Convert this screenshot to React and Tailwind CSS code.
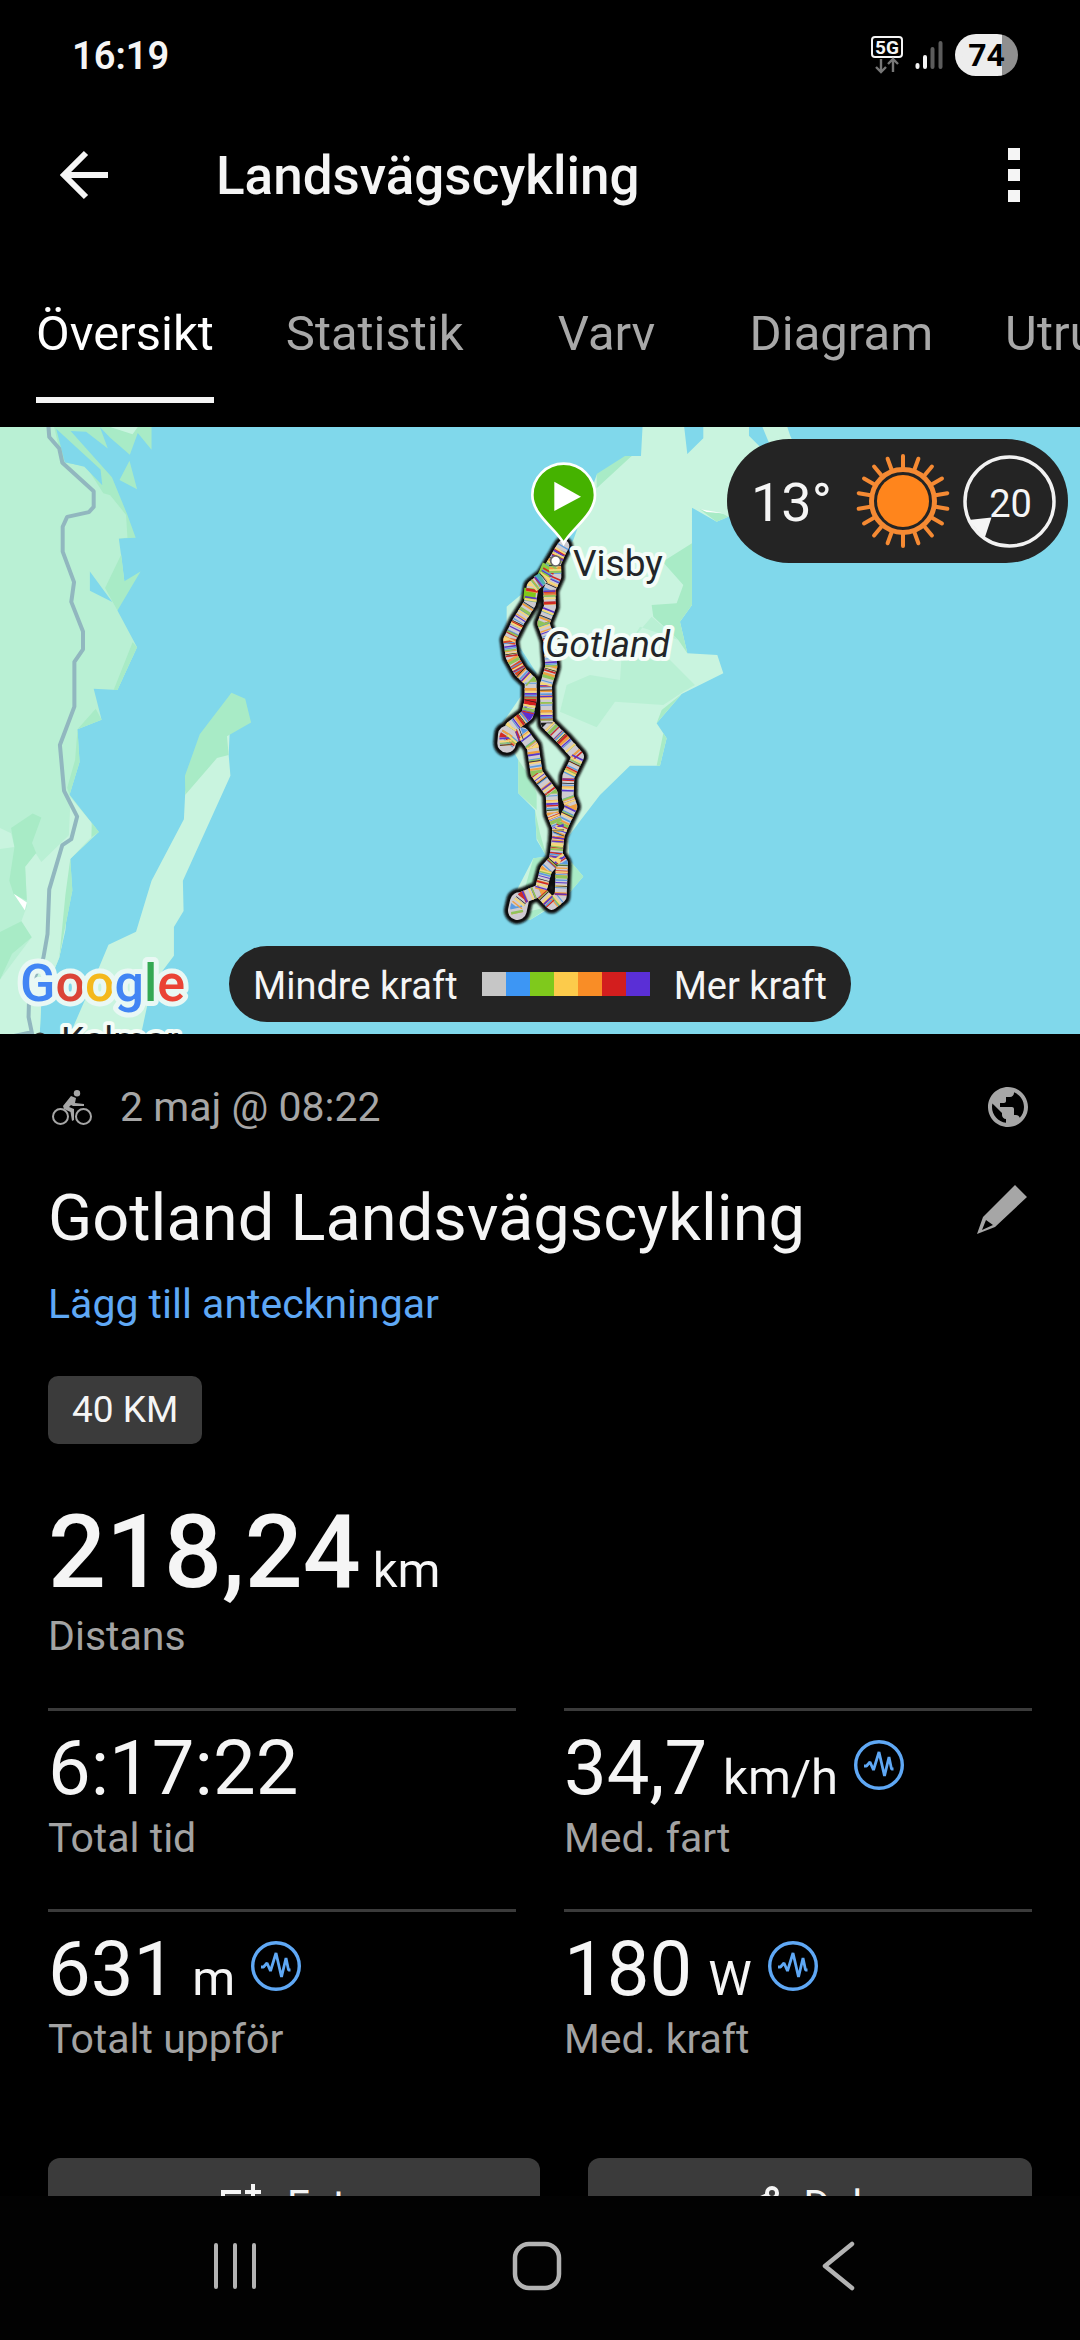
import React from "react";
import { MdPublic } from "react-icons/md";

const tabs = [
  { label: "Översikt", active: true },
  { label: "Statistik" },
  { label: "Varv" },
  { label: "Diagram" },
  { label: "Utrustning" },
];

const powerScale = ["#c6c6c6", "#3d96f4", "#7fc91c", "#fccb4b", "#f98d26", "#d31e1e", "#5a2fd6"];

const stats = [
  { value: "6:17:22", label: "Total tid" },
  { value: "34,7", unit: "km/h", label: "Med. fart", trend: true },
  { value: "631", unit: "m", label: "Totalt uppför", trend: true },
  { value: "180", unit: "W", label: "Med. kraft", trend: true },
];

const westLeg =
  "M370 318 L345 360 L315 410 L278 440 L270 490 L235 545 L208 600 L215 650 L240 695 L272 725 L272 780 L262 825 L215 860 L196 890 L198 918 L222 890 L248 880 L278 920 L290 1000 L335 1060 L338 1120 L354 1160 L355 1190 L345 1260 L318 1290 L302 1350 L250 1372 L228 1400 L232 1420";
const eastLeg =
  "M362 330 L345 370 L346 410 L328 450 L330 500 L310 550 L328 600 L334 680 L318 735 L320 850 L370 900 L414 950 L385 1010 L383 1070 L394 1100 L370 1150 L354 1190 L350 1245 L366 1270 L362 1370 L335 1392 L305 1360";

const bands = [
  { color: "#5b9be0", dash: "4 17 5 29 3 13" },
  { color: "#f0a040", dash: "6 31 4 19 8 43", offset: 7 },
  { color: "#d02a24", dash: "4 27 8 61 5 41", offset: 15 },
  { color: "#8fc45a", dash: "5 47 4 29 9 71", offset: 22 },
  { color: "#5b35c8", dash: "4 53 5 67 3 31", offset: 34 },
  { color: "#f5d77a", dash: "5 37 6 41", offset: 28 },
  { color: "#1c1c1c", dash: "2 97 2 61", offset: 50 },
];

const accents = [
  { d: "M271 445L268 478", color: "#7fc91c" },
  { d: "M210 595L208 612", color: "#d8452a" },
  { d: "M226 670L244 697", color: "#dc4a24" },
  { d: "M272 768L270 795", color: "#d31e1e" },
  { d: "M270 808L255 832", color: "#5a2fd6" },
  { d: "M330 450L331 468", color: "#e06a3a" },
  { d: "M325 375L310 410", color: "#8dcc3f" },
  { d: "M290 425L308 415", color: "#4fb3a8" },
];

function Statusbar() {
  return (
    <div className="flex h-[110px] shrink-0 items-center justify-between pl-[72px] pr-[62px]">
      <span className="pt-px text-[38px] font-semibold leading-none">16:19</span>
      <div className="flex items-center gap-3">
        <svg width="32" height="38" viewBox="0 0 32 38" aria-label="5G">
          <rect x="1" y="1" width="30" height="20" rx="3" fill="none" stroke="#f5f5f5" strokeWidth="2" />
          <text x="16" y="18" textAnchor="middle" fontSize="19" fontWeight="700" fill="#f5f5f5" fontFamily="Roboto">5G</text>
          <path d="M10 23V36M5 31l5 5 5-5M22 36V23M17 28l5-5 5 5" stroke="#777" strokeWidth="2.4" fill="none" />
        </svg>
        <svg width="28" height="30" viewBox="0 0 28 30">
          <g strokeWidth="4" strokeLinecap="round">
            <path d="M2.500 25V27M10 17V27" stroke="#f5f5f5" />
            <path d="M17.500 9V27M25.500 3V27" stroke="#5c5c5c" />
          </g>
        </svg>
        <div className="flex h-[42px] w-[63px] items-center justify-center rounded-full bg-linear-to-r from-[#ededed] from-74% to-[#8f8f8f] to-74%">
          <span className="text-[32px] font-bold leading-none text-black">74</span>
        </div>
      </div>
    </div>
  );
}

function MapDrawing() {
  return (
    <svg className="block h-[607px] w-full" viewBox="0 0 1080 607" preserveAspectRatio="xMidYMid slice" fontFamily="Roboto, sans-serif">
      <defs>
        <filter id="soft" filterUnits="userSpaceOnUse" x="100" y="250" width="400" height="1250">
          <feGaussianBlur stdDeviation="3" />
        </filter>
      </defs>
      <rect width="1080" height="607" fill="#80d8eb" />
      <g transform="translate(0 -7) scale(0.3444 0.3954)">
        <path fill="#a8ebc6" d="M150 10H440V75L400 33L377 88L320 45L290 18L313 72L250 30L205 28L325 145L370 240L394 298L340 300L240 115L180 105Z M376 103L398 175L347 152Z" />
        <path fill="#b9f0d4" d="M0 10H155L181 106L250 117L300 185L320 190L366 240L370 298L345 300L352 345L361 408L341 482L398 575L341 683L272 680L295 758L225 782L231 865L202 948L287 1042L204 1110L210 1190L172 1360L120 1470L115 1560H0Z" />
        <path fill="#80d8eb" d="M163 22L292 125L297 165L245 118L188 106Z M261 383L326 460L261 432Z" />
        <path fill="#a8ebc6" d="M352 340L361 408L408 383L341 482L305 425Z M398 575L341 683L330 683L385 562Z M295 758L225 782L278 730Z M225 782L231 865L202 948L195 930L218 860Z M287 1042L265 1055L268 1020Z" />
        <path fill="#c9f4df" d="M120 1118L200 1050L205 955L265 1018L265 1055L204 1110L190 1290L172 1360L120 1470L115 1560H0V1415L92 1308L62 1268L78 1230L73 1130L103 1095Z M0 1032L32 1045L42 1080L0 1085Z M210 18H400L385 36L320 18Z" />
        <path fill="#a8ebc6" d="M32 1032L95 995L120 1005L93 1070L105 1095L73 1130L78 1215L40 1200L27 1165L42 1080Z M0 1295L62 1268L92 1308L35 1350L0 1415Z M204 1110L210 1190L172 1360L190 1200Z" />
        <path fill="#fff" d="M40 1198L78 1220L72 1240Z" />
        <path fill="#c9f4df" d="M672 690L664 847L669 900L531 1165L533 1242L505 1282L505 1355L440 1430L408 1560H200L285 1390L315 1327L395 1294L440 1165L534 1010L538 940Z" />
        <path fill="#a8ebc6" d="M672 690L712 705L729 765L659 800L664 847L630 855L538 948L537 900L580 795Z" />
        <path
          fill="none"
          stroke="#91b7bf"
          strokeWidth="4"
          strokeLinejoin="round"
          vectorEffect="non-scaling-stroke"
          d="M140 10L143 43L172 72L181 108L272 180V220L258 233L195 245L182 270V333L215 410L207 460L241 535V580L216 612V725L174 822L186 938L224 1003L207 1060L181 1075L143 1187L138 1300L126 1360L85 1440L83 1510L95 1560M95 1548L40 1558"
        />
      </g>
      <g transform="translate(440 13) scale(0.3333)">
        <path fill="#c9f4df" d="M470 105L575 48H603L608 -45H732L742 42L790 -5V-45H927V-13L960 20L1000 40L965 -45H1040L1050 -15L1100 100L865 230L830 245L756 203V495L720 545L742 640L832 645L850 700L725 762L650 850L680 895L660 977H570L480 1065L415 1150L385 1190L388 1260L430 1310L370 1380L270 1440L200 1410L280 1255L320 1250L290 1200L285 1110L235 1060V960L180 860L290 700L200 560V500L260 450L340 400L400 300Z" />
        <path fill="#a8ebc6" d="M756 310L668 365L730 435L710 490L635 495L640 530L715 600L742 640L720 545L756 495Z M470 145L470 102L555 48H575Z M235 960L262 1000L290 1060V1110L235 1060Z M780 208L830 245L865 230L850 222Z M725 762L650 850L665 810Z M680 895L660 977H650L670 880Z M290 1195L285 1110L300 1180L320 1250Z M280 1255L320 1250L300 1310L245 1380Z M388 1260L430 1310L370 1380Z M270 1440L330 1400L200 1430Z" />
        <path fill="#b9f0d4" d="M635 530L550 630L690 660L765 735L730 755L670 795L525 785L470 862L360 815L380 735L450 705L540 720L545 650L600 560L715 600Z" />
        <path fill="#fff" d="M782 208L850 220L800 216Z" />
        <g fill="none" strokeLinejoin="round" strokeLinecap="round">
          <g stroke="#0c0c0c" strokeWidth="58" filter="url(#soft)">
            <path d={westLeg} />
            <path d={eastLeg} />
            <path d="M202 885L200 910M238 1385L232 1412" strokeWidth="80" />
          </g>
          <g stroke="#cfcbd0" strokeWidth="36">
            <path d={westLeg} />
            <path d={eastLeg} />
            <path d="M202 885L200 910M238 1385L232 1412" strokeWidth="56" />
          </g>
        </g>
        <g fill="none" strokeWidth="36" strokeLinejoin="bevel">
          {accents.map((a) => (
            <path key={a.d} d={a.d} stroke={a.color} />
          ))}
          {bands.map((b) => (
            <React.Fragment key={b.color}>
              <path d={westLeg} stroke={b.color} strokeDasharray={b.dash} strokeDashoffset={b.offset} />
              <path d={eastLeg} stroke={b.color} strokeDasharray={b.dash} strokeDashoffset={b.offset} />
            </React.Fragment>
          ))}
        </g>
        <circle cx="347" cy="363" r="15" fill="#fff" stroke="#666" strokeWidth="5" />
        <path d="M371 310C350 268 277 225 277 165a94 94 0 0 1 188 0C465 225 392 268 371 310Z" fill="#45b200" stroke="#fff" strokeWidth="8" />
        <path d="M343 125V213L423 170Z" fill="#fff" />
      </g>
      <g fontSize="37" fill="#222629" stroke="#f4fdf8" strokeWidth="8" strokeLinejoin="round" paintOrder="stroke">
        <text x="573" y="149">Visby</text>
        <text x="545" y="230" fontStyle="italic">Gotland</text>
        <text x="61" y="626">Kalmar</text>
      </g>
      <circle cx="40" cy="613" r="6" fill="#fff" stroke="#333" strokeWidth="3" />
      <text x="20" y="574" fontSize="52" fontWeight="500" stroke="#e9f8f4" strokeWidth="10" strokeLinejoin="round" paintOrder="stroke">
        <tspan fill="#4285f4">G</tspan>
        <tspan fill="#db4437">o</tspan>
        <tspan fill="#f4b81c">o</tspan>
        <tspan fill="#4285f4">g</tspan>
        <tspan fill="#34a853">l</tspan>
        <tspan fill="#ea4335">e</tspan>
      </text>
    </svg>
  );
}

const rays = Array.from({ length: 18 }, (_, i) => i * 20);

function Weather() {
  return (
    <div className="absolute right-3 top-3 flex h-[124px] items-center rounded-full bg-[#242424] pl-6 pr-3">
      <span className="w-[88px] pt-1 text-[54px] leading-none">13°</span>
      <svg className="ml-4" width="96" height="96" viewBox="-48 -48 96 96">
        <circle r="26" fill="#ff851c" />
        <circle r="31.500" fill="none" stroke="#f58a33" strokeWidth="5" />
        <g stroke="#f58a33" strokeWidth="4" strokeLinecap="round">
          {rays.map((a) => (
            <path key={a} d="M0 -33V-45" transform={`rotate(${a})`} />
          ))}
        </g>
      </svg>
      <svg className="ml-3" width="93" height="93" viewBox="-46.500 -46.500 93 93">
        <circle r="44.500" fill="none" stroke="#f2f2f2" strokeWidth="3.500" />
        <path d="M-41 18.500L-18 16L-25 37Z" fill="#f5f5f5" />
        <text x="1" y="15" textAnchor="middle" fontSize="38" fill="#f5f5f5" fontFamily="Roboto">20</text>
      </svg>
    </div>
  );
}

function TrendIcon() {
  return (
    <svg className="ml-4 mt-[18px] self-start" width="50" height="50" viewBox="0 0 50 50" fill="none" stroke="#5fa8f5">
      <circle cx="25" cy="25" r="23.300" strokeWidth="3.400" />
      <path d="M10 26h2.500l3.500-4 3.500 8L25 12l5.500 24 4.500-19 2.500 12h2" strokeWidth="2.800" strokeLinejoin="bevel" />
    </svg>
  );
}

function Stat({ value, unit, label, trend }) {
  return (
    <div className="border-t-[3px] border-[#3b3b3b] pt-[11px]">
      <div className="flex items-baseline whitespace-nowrap">
        <span className="text-[76px] leading-[92px]">{value}</span>
        {unit && <span className="ml-4 text-[49px] leading-[60px]">{unit}</span>}
        {trend && <TrendIcon />}
      </div>
      <div className="text-[41px] leading-[48px] text-[#a3a3a3]">{label}</div>
    </div>
  );
}

export default function App() {
  return (
    <div className="flex h-screen flex-col overflow-hidden bg-black font-['Roboto',sans-serif] text-[#f5f5f5]">
      <Statusbar />
      <header className="flex h-[130px] shrink-0 items-center pl-[58px] pr-[60px]">
        <button aria-label="Tillbaka">
          <svg width="52" height="50" viewBox="0 0 52 50" fill="none" stroke="#f5f5f5" strokeWidth="6">
            <path d="M50 25H6M28 3L6 25L28 47" />
          </svg>
        </button>
        <h1 className="ml-[106px] flex-1 pt-[2px] text-[53px] font-medium leading-none">Landsvägscykling</h1>
        <button aria-label="Fler alternativ" className="flex flex-col gap-[9px]">
          <span className="size-3 bg-[#f5f5f5]" />
          <span className="size-3 bg-[#f5f5f5]" />
          <span className="size-3 bg-[#f5f5f5]" />
        </button>
      </header>
      <nav className="flex shrink-0 overflow-hidden pb-6">
        {tabs.map((t) => (
          <button key={t.label} className="min-w-[214px] shrink-0 px-9">
            <span
              className={
                t.active
                  ? "block border-b-[6px] border-[#f5f5f5] pb-[35px] pt-[66px] text-[49px] leading-[56px] text-white"
                  : "block border-b-[6px] border-transparent pb-[35px] pt-[66px] text-[49px] leading-[56px] text-[#a8a8a8]"
              }
            >
              {t.label}
            </span>
          </button>
        ))}
      </nav>
      <main className="min-h-0 flex-1 overflow-hidden">
        <div className="relative">
          <MapDrawing />
          <Weather />
          <div className="absolute inset-x-0 bottom-3 flex justify-center">
            <div className="flex h-[76px] items-center gap-6 rounded-full bg-[#242424] px-6 text-[38px]">
              <span className="pt-1">Mindre kraft</span>
              <div className="flex">
                {powerScale.map((c) => (
                  <span key={c} className="size-6" style={{ backgroundColor: c }} />
                ))}
              </div>
              <span className="pt-1">Mer kraft</span>
            </div>
          </div>
        </div>

        <section className="px-12 pt-[45px]">
          <div className="flex h-14 items-center text-[#a6a6a6]">
            <svg className="ml-1" width="40" height="35" viewBox="0 0 40 35" fill="none" stroke="currentColor">
              <circle cx="8.500" cy="26.500" r="7.500" strokeWidth="2" />
              <circle cx="31.500" cy="26.500" r="7.500" strokeWidth="2" />
              <circle cx="25" cy="3.200" r="3.200" fill="currentColor" stroke="none" />
              <path d="M19 6L24 8L23 13L32 14V16H21L19 15L17 17L22 19V30L20 31L18.500 22L12 19L11 16Z" fill="currentColor" stroke="none" />
            </svg>
            <span className="ml-7 flex-1 text-[41px] leading-[48px]">2 maj @ 08:22</span>
            <MdPublic className="size-12" />
          </div>
          <div className="mt-[43px] flex items-center justify-between">
            <h2 className="text-[65px] leading-[80px]">Gotland Landsvägscykling</h2>
            <button aria-label="Redigera" className="mr-1 pb-4">
              <svg width="52" height="52" viewBox="0 0 52 52" fill="#a6a6a6">
                <path fillRule="evenodd" d="M39 1L51 13L19 43L1 50L7 33ZM10 36L6 46L17 41Z" />
              </svg>
            </button>
          </div>
          <a href="#anteckningar" className="mt-[22px] block text-[41px] leading-[48px] text-[#5fa8f5]">
            Lägg till anteckningar
          </a>
          <div className="mt-12 flex">
            <span className="rounded-[10px] bg-[#3b3b3b] px-6 text-[37px] leading-[68px]">40 KM</span>
          </div>
          <div className="mt-12 flex items-baseline">
            <span className="text-[102px] font-medium leading-[120px]">218,24</span>
            <span className="ml-3 text-[49px] leading-[60px]">km</span>
          </div>
          <div className="text-[41px] leading-[48px] text-[#a3a3a3]">Distans</div>
          <div className="mt-12 grid grid-cols-2 gap-x-12 gap-y-[47px]">
            {stats.map((s) => (
              <Stat key={s.label} {...s} />
            ))}
          </div>
          <div className="mt-[95px] flex gap-12">
            <button className="flex h-24 flex-[41] items-center justify-center gap-6 rounded-xl bg-[#3b3b3b] text-[41px]">
              <svg width="44" height="44" viewBox="0 0 44 44" fill="none" stroke="#f5f5f5" strokeWidth="4">
                <path d="M22 8H4V42H38V22M34 0V16M26 8H42M9 35L17 25L23 31L27 27L34 35" />
              </svg>
              <span>Foto</span>
            </button>
            <button className="flex h-24 flex-[37] items-center justify-center gap-6 rounded-xl bg-[#3b3b3b] text-[41px]">
              <svg width="44" height="40" viewBox="0 0 44 40" fill="none" stroke="#f5f5f5" strokeWidth="4">
                <circle cx="36" cy="7" r="5" />
                <circle cx="7" cy="20" r="5" />
                <circle cx="36" cy="33" r="5" />
                <path d="M12 18L31 9M12 22L31 31" />
              </svg>
              <span>Dela</span>
            </button>
          </div>
        </section>
      </main>
      <footer className="flex h-36 shrink-0 items-center justify-center gap-[252px] bg-[#020202] pb-1 pr-[6px]">
        <button aria-label="Senaste appar">
          <svg width="50" height="50" viewBox="0 0 50 50" stroke="#b3b3b3" strokeWidth="4" strokeLinecap="round">
            <path d="M6 4V46M25 4V46M44 4V46" />
          </svg>
        </button>
        <button aria-label="Hem">
          <svg width="50" height="50" viewBox="0 0 50 50" fill="none" stroke="#b3b3b3" strokeWidth="4.500">
            <rect x="3" y="3" width="44" height="44" rx="14" />
          </svg>
        </button>
        <button aria-label="Bakåt">
          <svg width="50" height="50" viewBox="0 0 50 50" fill="none" stroke="#b3b3b3" strokeWidth="4.500" strokeLinecap="round" strokeLinejoin="round">
            <path d="M38 3L11 25L38 47" />
          </svg>
        </button>
      </footer>
    </div>
  );
}
